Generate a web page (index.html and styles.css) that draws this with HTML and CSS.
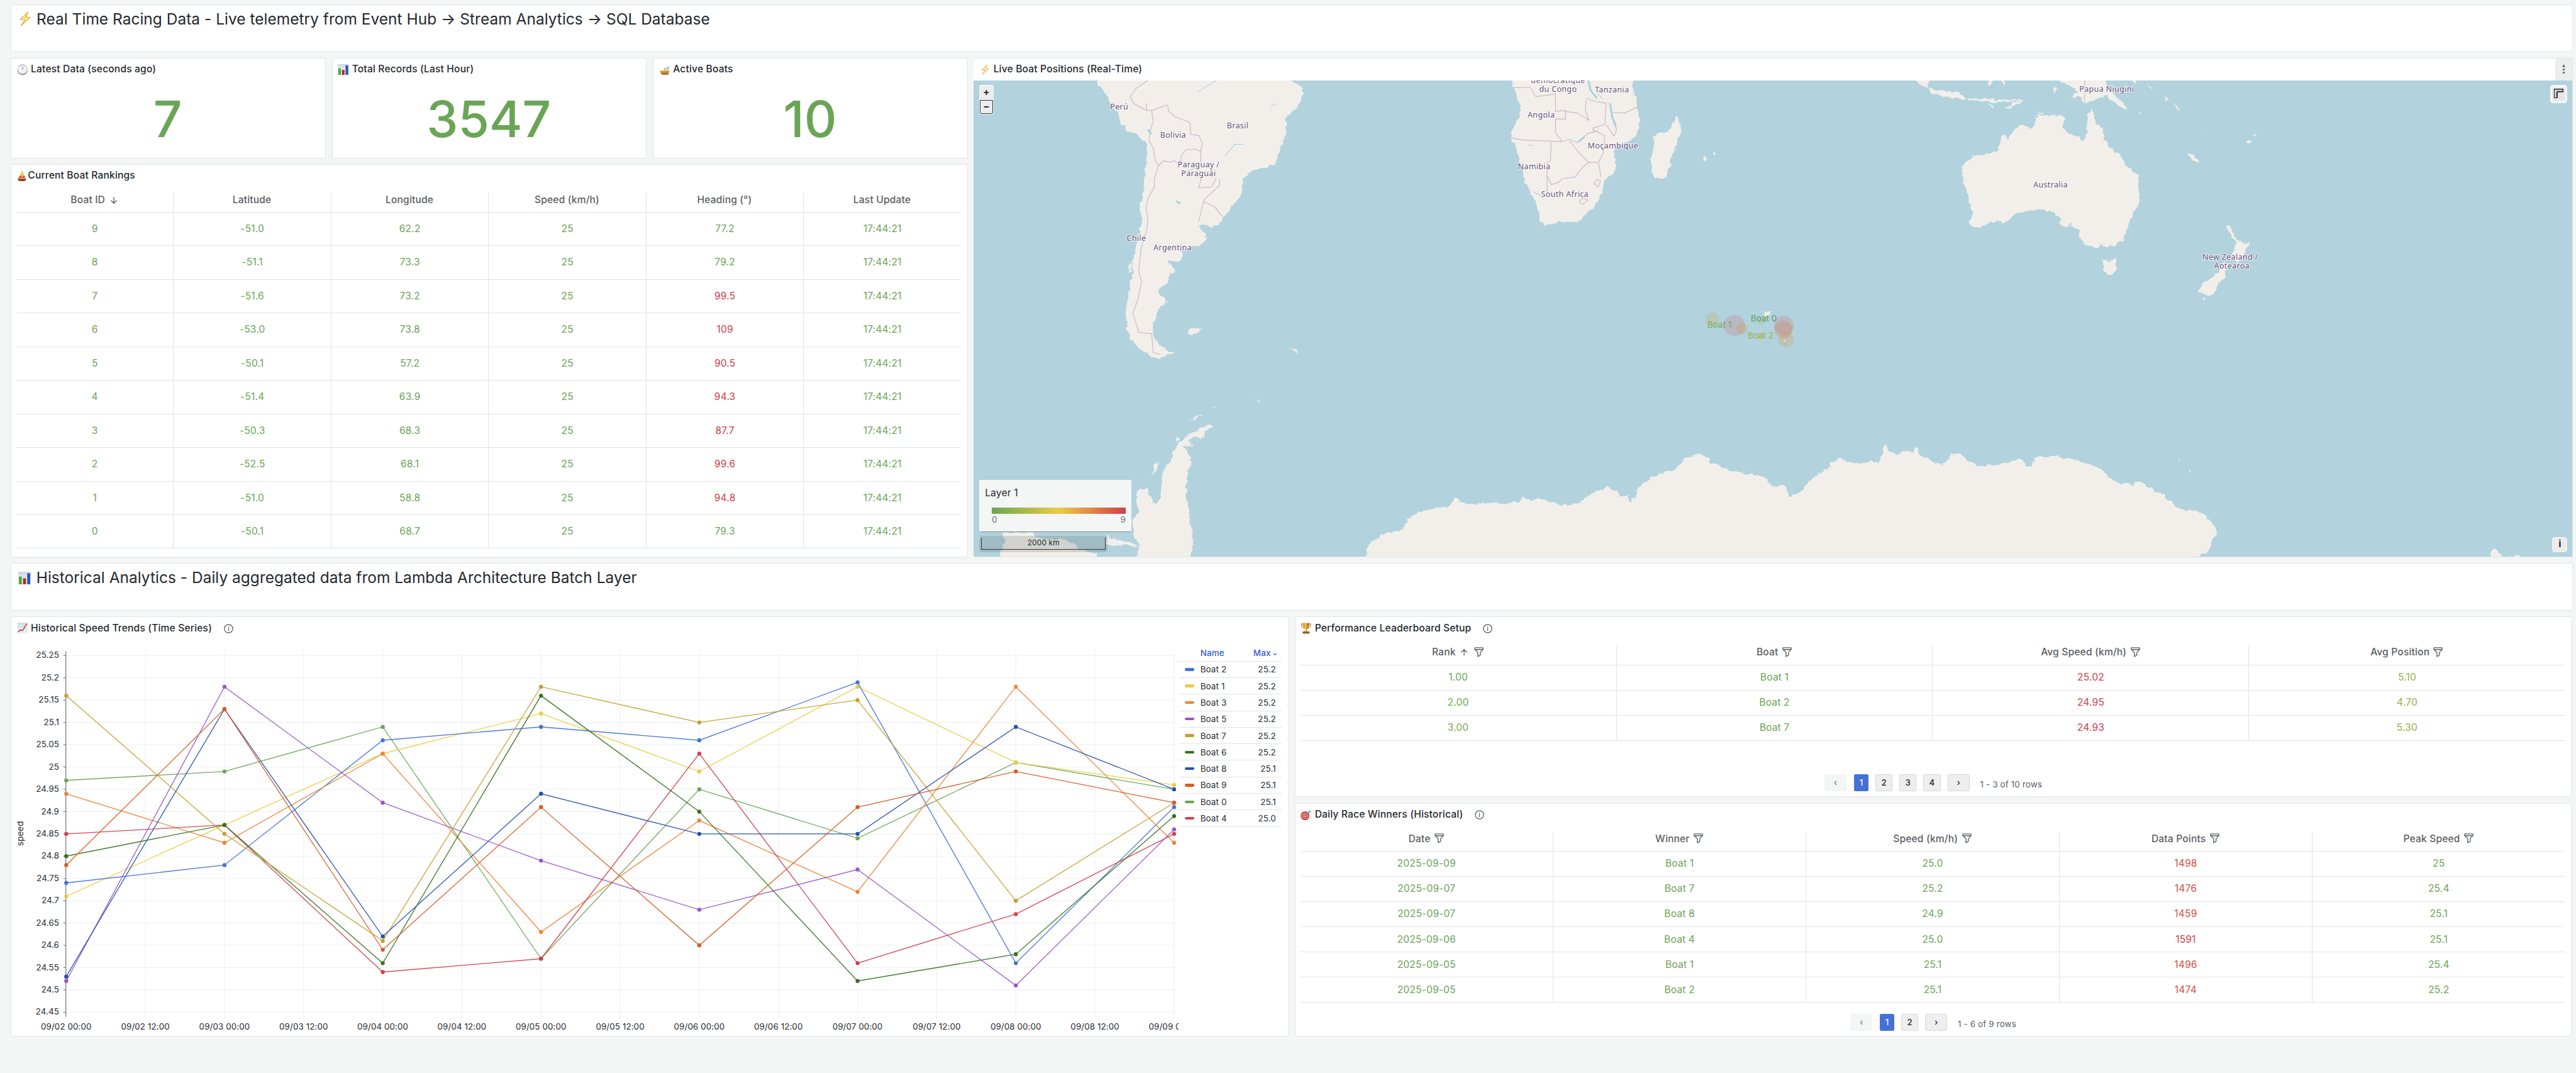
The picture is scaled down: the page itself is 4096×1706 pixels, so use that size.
FILE: index.html
```html
<!DOCTYPE html>
<html lang="en">
<head>
<meta charset="utf-8">
<title>Racing telemetry</title>
<link rel="stylesheet" href="styles.css">
</head>
<body>
<svg class="defs" aria-hidden="true">
  <defs>
    <linearGradient id="gold" x1="0" x2="1"><stop offset="0" stop-color="#b9791c"/><stop offset=".4" stop-color="#f2c44c"/><stop offset="1" stop-color="#8a5a12"/></linearGradient>
    <linearGradient id="paper" x1="0" y1="0" x2="0" y2="1"><stop offset="0" stop-color="#cbd6e2"/><stop offset="1" stop-color="#eef2f6"/></linearGradient>
    <linearGradient id="silver" x1="0" y1="0" x2="0" y2="1"><stop offset="0" stop-color="#8f9296"/><stop offset=".3" stop-color="#dcdee0"/><stop offset="1" stop-color="#6f7276"/></linearGradient>
    <linearGradient id="sail" x1="0" y1="0" x2="0" y2="1"><stop offset="0" stop-color="#f0b429"/><stop offset=".5" stop-color="#f4d742"/><stop offset=".7" stop-color="#e8603a"/><stop offset="1" stop-color="#d8402f"/></linearGradient>
    <symbol id="e-bolt" viewBox="0 0 20 28"><path d="M15.500 1.500 1.200 14.800l8.400.6L2.800 26.500 18.800 11.500l-7.600-.8z" fill="#fbe9b0" stroke="#eeae3b" stroke-width="1.500" stroke-linejoin="round"/></symbol>
    <symbol id="e-clock" viewBox="0 0 21 21"><circle cx="10.500" cy="10.500" r="10" fill="url(#silver)"/><circle cx="10.500" cy="10.300" r="8.400" fill="#f3f3f4"/><path d="M10.500 10.500V4M10.500 10.500l2-4" stroke="#8b8d90" stroke-width=".9"/></symbol>
    <symbol id="e-bars" viewBox="0 0 21 21"><path fill="url(#paper)" d="M0 0h21v21H0z"/><path d="M0 5.500h21M0 11h21M0 16h21" stroke="#fff" stroke-width=".6"/><path fill="#4fa93c" d="M1 8h5v13H1z"/><path fill="#b32b26" d="M8 11h5v10H8z"/><path fill="#2457ad" d="M15 2.500h5V21h-5z"/></symbol>
    <symbol id="e-trend" viewBox="0 0 21 21"><path fill="url(#paper)" d="M1 0h19v21H1z"/><path d="M1 5h19M1 10h19M1 15h19M7 0v21M14 0v21" stroke="#fff" stroke-width=".6"/><path d="m2 18 4-4 3 1 3-1 3-7 4-5" fill="none" stroke="#c8352c" stroke-width="1.800"/></symbol>
    <symbol id="e-speed" viewBox="0 0 22 21"><path d="M1 12h7l3-1h10l-2 7H4z" fill="#c98325"/><path d="M1 12h7l3-1h9l1 1-1 2H2z" fill="#eec45c"/><path d="M4 18h15l-1 2.500H5z" fill="#9c5a1c"/><path d="m14 10 2-4 4-3-2 7z" fill="#57b9dc"/><circle cx="11.500" cy="8.500" r="1.800" fill="#e0a33b"/></symbol>
    <symbol id="e-sail" viewBox="0 0 18 21"><path d="M9.200 0v17" stroke="#9a5b21" stroke-width=".8"/><path d="M8.600 2 2 15h6.600z" fill="url(#sail)"/><path d="M10 3c3 4 5 8 5.500 12H10z" fill="url(#sail)"/><path d="M.5 16h17c-1 3-3 4.500-5 4.500H5C3 20.500 1.200 18.500.5 16z" fill="#7e4b24"/></symbol>
    <symbol id="e-cup" viewBox="0 0 20 21"><path d="M4.500 2.500H1c0 4.500 2 7.500 5.500 8M15.500 2.500H19c0 4.500-2 7.500-5.500 8" fill="none" stroke="#c58a22" stroke-width="1.400"/><path d="M4 .5h12c0 6-1.500 11-4.500 12v3.500h-3V12.500C5.500 11.500 4 6.500 4 .5z" fill="url(#gold)"/><path d="M5.500 15.500h9l1 2h-11z" fill="#d9a035"/><path d="M3.500 17.500h13V21h-13z" fill="#8a4e1e"/></symbol>
    <symbol id="e-dart" viewBox="0 0 21 21"><circle cx="8.500" cy="12" r="8.300" fill="#c4302b"/><circle cx="8.500" cy="12" r="6.100" fill="#f3f1ef"/><circle cx="8.500" cy="12" r="5" fill="#cf3a33"/><circle cx="8.500" cy="12" r="2.800" fill="#f3f1ef"/><circle cx="8.500" cy="12" r="1.600" fill="#c4302b"/><path d="m9 11.500 7-7" stroke="#6b7a80" stroke-width="1.200"/><path d="m15 4 3-3.500.5 2.500 2.300.7L17 7l-2.500.3z" fill="#62b8c4"/></symbol>
    <symbol id="i-info" viewBox="0 0 18 18"><circle cx="9" cy="9" r="8" fill="none" stroke="#5a5e62" stroke-width="1.500"/><path d="M9 8.300v4.400" stroke="#5a5e62" stroke-width="1.600" stroke-linecap="round"/><circle cx="9" cy="5.500" r="1" fill="#5a5e62"/></symbol>
    <symbol id="i-funnel" viewBox="0 0 18 19"><path d="M1.800 1h14.400q.8 0 .8.800v1.700q0 .8-.6 1.400L11.600 10v5.500L7 17.800V10L1.600 4.900Q1 4.300 1 3.500V1.800Q1 1 1.800 1zM1.500 4.500h15" fill="none" stroke="#5a5e62" stroke-width="1.600" stroke-linejoin="round"/></symbol>
    <symbol id="i-down" viewBox="0 0 12 13"><path d="M6 .8v11.200M1 7.200l5 5 5-5" fill="none" stroke="#5a5e62" stroke-width="1.600" stroke-linecap="round" stroke-linejoin="round"/></symbol>
    <symbol id="i-up" viewBox="0 0 12 13"><path d="M6 12.200V1M1 5.800l5-5 5 5" fill="none" stroke="#5a5e62" stroke-width="1.600" stroke-linecap="round" stroke-linejoin="round"/></symbol>
  </defs>
</svg>

<main class="board">
  <section class="panel banner">
    <h1><svg class="h-icon"><use href="#e-bolt"/></svg>Real Time Racing Data - Live telemetry from Event Hub → Stream Analytics → SQL Database</h1>
  </section>

  <div class="live">
    <div class="live-left">
      <div class="stats">
        <section class="panel"><h2><svg class="emoji"><use href="#e-clock"/></svg>Latest Data (seconds ago)</h2><div class="stat">7</div></section>
        <section class="panel"><h2><svg class="emoji"><use href="#e-bars"/></svg>Total Records (Last Hour)</h2><div class="stat">3547</div></section>
        <section class="panel"><h2><svg class="emoji"><use href="#e-speed"/></svg>Active Boats</h2><div class="stat">10</div></section>
      </div>
      <section class="panel rankings">
        <h2 class="tight"><svg class="emoji"><use href="#e-sail"/></svg>Current Boat Rankings</h2>
        <div class="table tall">
          <div class="tr th"><div>Boat ID<svg class="sort"><use href="#i-down"/></svg></div><div>Latitude</div><div>Longitude</div><div>Speed (km/h)</div><div>Heading (°)</div><div>Last Update</div></div>
          <div class="tr"><div>9</div><div>-51.0</div><div>62.2</div><div>25</div><div>77.2</div><div>17:44:21</div></div>
          <div class="tr"><div>8</div><div>-51.1</div><div>73.3</div><div>25</div><div>79.2</div><div>17:44:21</div></div>
          <div class="tr"><div>7</div><div>-51.6</div><div>73.2</div><div>25</div><div class="red">99.5</div><div>17:44:21</div></div>
          <div class="tr"><div>6</div><div>-53.0</div><div>73.8</div><div>25</div><div class="red">109</div><div>17:44:21</div></div>
          <div class="tr"><div>5</div><div>-50.1</div><div>57.2</div><div>25</div><div class="red">90.5</div><div>17:44:21</div></div>
          <div class="tr"><div>4</div><div>-51.4</div><div>63.9</div><div>25</div><div class="red">94.3</div><div>17:44:21</div></div>
          <div class="tr"><div>3</div><div>-50.3</div><div>68.3</div><div>25</div><div class="red">87.7</div><div>17:44:21</div></div>
          <div class="tr"><div>2</div><div>-52.5</div><div>68.1</div><div>25</div><div class="red">99.6</div><div>17:44:21</div></div>
          <div class="tr"><div>1</div><div>-51.0</div><div>58.8</div><div>25</div><div class="red">94.8</div><div>17:44:21</div></div>
          <div class="tr"><div>0</div><div>-50.1</div><div>68.7</div><div>25</div><div>79.3</div><div>17:44:21</div></div>
        </div>
      </section>
    </div>

    <section class="panel map-panel">
      <div class="map-head">
        <h2><svg class="emoji bolt"><use href="#e-bolt"/></svg>Live Boat Positions (Real-Time)</h2>
        <button class="kebab" aria-label="Menu"><i></i><i></i><i></i></button>
      </div>
      <div class="map">
        <svg class="world" viewBox="1854 153 3044 907" preserveAspectRatio="none">
          <defs>
            <filter id="coast" filterUnits="userSpaceOnUse" x="1840" y="140" width="3080" height="940"><feTurbulence type="fractalNoise" baseFrequency=".09" numOctaves="3" seed="4"/><feDisplacementMap in="SourceGraphic" scale="10" xChannelSelector="R" yChannelSelector="G"/></filter>
          </defs>
          <g class="land" filter="url(#coast)">
            <g transform="translate(1840 90) scale(.9949 .625)">
              <path d="M252 80V118L262 130 270 150 277 172 290 200 295 232 310 255 328 268 345 292 347 330 343 380 340 430 334 480 336 530 330 575 322 620 318 650 319 690 313 720 311 760 306 800 307 850 313 885 325 905 345 935 370 952 385 935 398 930 380 920 362 890 357 870 355 845 365 820 366 795 383 785 383 765 368 750 370 735 385 720 388 700 388 690 400 683 398 672 390 665 388 650 405 653 412 640 412 615 430 610 450 600 460 580 458 565 445 545 448 538 465 545 480 542 492 520 500 500 510 480 515 470 526 450 530 400 540 385 555 370 590 360 597 330 605 300 610 260 612 220 625 195 640 165 645 140 640 112 620 106 618 80z"/>
              <path d="M1046 80V120L1055 150 1060 190 1055 220 1045 250 1042 275 1050 300 1060 340 1066 380 1070 410 1080 440 1090 470 1095 500 1098 530 1110 544 1130 533 1155 532 1170 530 1190 505 1205 475 1218 445 1220 415 1222 402 1242 385 1243 350 1238 320 1245 300 1262 290 1285 265 1289 240 1286 190 1280 150 1275 125 1278 80z"/>
              <path d="M1360 208 1368 240 1368 262 1362 280 1355 320 1345 365 1338 392 1328 401 1315 393 1311 360 1310 340 1318 310 1316 270 1325 262 1345 252 1352 235z"/>
              <path d="M766 1580V1535L775 1505 790 1495 805 1478 835 1470 845 1440 865 1415 895 1403 925 1398 935 1372 945 1385 965 1392 985 1388 1005 1385 1030 1390 1055 1385 1065 1368 1080 1375 1110 1378 1130 1390 1155 1395 1175 1385 1190 1365 1210 1350 1228 1338 1245 1352 1252 1370 1265 1360 1270 1385 1280 1370 1285 1342 1310 1310 1335 1295 1360 1280 1368 1265 1375 1250 1400 1238 1415 1245 1425 1265 1440 1275 1465 1290 1500 1298 1530 1307 1540 1335 1568 1338V1580z"/>
              <path d="M322 1580 332 1520 320 1480 318 1440 330 1415 325 1380 328 1350 345 1342 352 1365 360 1390 372 1370 375 1310 380 1280 395 1245 400 1215 420 1185 445 1165 460 1150 472 1155 455 1170 455 1190 440 1185 425 1200 435 1215 415 1212 425 1235 430 1265 425 1290 420 1330 422 1380 428 1440 434 1500 428 1580z"/>
              <path d="M60 1580 66 1545 74 1500 68 1480 130 1478 130 1490 170 1500 190 1495 205 1510 216 1530 250 1540V1580z"/>
              <path d="M270 1486 290 1500 310 1505 332 1522 300 1515 285 1522 268 1510z"/>
              <path d="M423 872 428 857 450 855 445 868 430 874zM620 910 632 918 637 934 628 925zM398 1203 402 1185 408 1192zM356 1300 360 1270 372 1265 365 1285zM423 1140 440 1125 452 1118 440 1132zM551 1077l7-2 5 6zM470 1094l8 0-4 5zM392 680l8-8 0 14zM313 660l4-6-2 30-6 8zM1411 332h5v8h-5zM1428 320h5v6h-5z"/>
            </g>
            <g transform="translate(3380 90) scale(.97194 .625)">
              <path d="M0 1580V1335H20L30 1370 45 1358 58 1345 65 1322 85 1300 105 1280 110 1265 130 1250 155 1270 185 1262 205 1262 211 1240 211 1215 218 1210 226 1232 240 1240 255 1225 272 1238 276 1215 285 1242 305 1258 328 1273 340 1255 345 1242 362 1236 375 1255 400 1275 440 1270 460 1262 480 1250 492 1276 502 1276 512 1247 550 1244 585 1255 625 1273 645 1292 655 1310 670 1325 700 1330 715 1322 730 1340 760 1360 775 1380 785 1400 800 1412 830 1412 845 1430 860 1448 866 1465 862 1490 855 1510 850 1535 830 1552V1580z"/>
              <path d="M367 380 372 350 390 332 405 325 432 318 440 300 443 275 450 268 458 280 465 255 480 235 492 240 500 250 507 240 510 215 515 205 525 208 540 205 560 208 567 215 560 240 575 260 595 275 602 286 609 275 612 235 613 205 618 189 625 205 630 235 641 248 645 275 655 305 672 320 685 350 700 375 711 392 715 445 708 490 695 530 688 560 682 592 668 597 650 612 640 600 628 611 605 600 597 580 595 560 585 550 580 545 582 530 574 548 560 545 555 515 545 503 520 492 500 497 480 505 465 515 455 530 420 532 400 549 385 543 381 530 387 515 385 480 378 450 370 410z"/>
              <path d="M640 645 655 652 669 647 668 675 662 692 652 697 645 675zM884 541 895 555 902 575 907 585 917 597 932 592 928 610 918 625 912 650 905 658 898 645 897 625 902 610 902 590 890 560zM880 650 890 660 885 675 883 700 870 715 862 745 850 757 830 745 835 725 850 705 865 690 875 670z"/>
              <path d="M555 80V101L570 110 585 120 592 135 585 150 580 155 595 150 608 165 625 165 635 150 650 148 660 165 675 180 690 185 680 165 668 150 660 135 650 115 645 80z"/>
              <path d="M275 90H300V122L285 118zM300 124 330 130 360 140 378 158 350 155 320 145 303 138zM380 155 410 156 435 160 480 158 485 162 440 168 400 164 380 161zM450 188 465 170 487 160 470 177zM413 171 430 175 428 182zM420 90H428L426 118 418 118zM440 90h10l-1 25zM546 120 552 118 550 138 546 132zM700 90h10l-5 25zM724 110 737 122 744 134zM760 148 773 160 768 162zM780 165 791 188 785 186zM806 320 820 330 832 352 818 344zM829 245 837 262 841 274zM923 285 930 282 934 290 927 294zM935 270 945 264 943 272zM514 198l14-3 0 8zM712 196l6 3-4 3zM773 198l6 4zM836 765l6-4-2 8zM791 1250l3 4 0 6zM811 1288l3 2-1 8z"/>
              <path d="M1402 1580V1533L1412 1528 1420 1542 1428 1552 1460 1548V1580z"/>
            </g>
            <path d="m3358 589 5 5 4-2 6 2-5 4 2 4-6 0-5 0z"/>
          </g>
          <g class="borders" transform="translate(1840 90) scale(.9949 .625)">
            <path d="M347 101 325 125 314 150 320 170 345 192 355 192 385 175 388 195 400 212 428 228 430 265 445 268 452 290 449 315V350M355 192 358 225 352 255 350 285 358 305 362 345 368 360 360 400V425L348 460 344 490 348 520 345 560 335 610 330 680 336 715 328 770 319 810 325 840 330 868 355 872 358 930 372 935M368 360 378 345 390 350 397 345 410 355 412 330 420 312 440 310 449 318M478 400 470 425 445 428 450 400M485 400V420L455 465 445 530M455 470 475 485 490 515M345 192V170"/>
            <path d="M1045 122H1080L1090 150 1115 145 1128 142V195L1147 192V218H1128V260L1140 285M1042 275 1065 282 1140 287 1155 280 1170 290 1190 262 1210 255M1120 290 1118 345 1112 350V440M1155 285 1175 325 1192 350H1210L1220 320 1222 270 1200 250M1112 390 1120 418 1135 410 1140 400 1165 395 1180 365 1192 350M1210 350 1215 395M1173 470 1180 458 1190 465 1180 478zM1187 160 1185 190 1192 222 1170 200 1147 195M1187 155 1205 165 1225 170 1222 235 1200 245V258M1225 235 1240 270 1245 250 1238 225M1235 198 1260 200 1285 182M1202 415l5-13 7 5-4 18zM1085 440l15 12"/>
            <path transform="translate(1547.900) scale(.97694 1)" d="M607 101V165"/>
          </g>
          <g class="lakes" transform="translate(1840 90) scale(.9949 .625)">
            <path d="M1191 101 1195 130 1207 155M1232 170 1237 215 1244 240M1172 288 1183 272M348 250l6 14M402 468l8 8" stroke-width="3"/>
            <path d="M444 135 478 101M582 180l12-8M495 330l20-35M512 295l18 0M425 375l12-6M1208 140l10 16M1075 298h10" stroke-width="1"/>
          </g>
          <g class="names">
            <text x="2131.500" y="208">Perú</text><text x="2357" y="244">Brasil</text><text x="2234" y="261.500">Bolivia</text>
            <text x="2282.500" y="318">Paraguay /</text><text x="2282.500" y="335.500">Paraguái</text><text x="2164" y="458">Chile</text><text x="2233" y="476">Argentina</text>
            <text x="2967" y="158">démocratique</text><text x="2967" y="175">du Congo</text><text x="3069.700" y="176">Tanzania</text><text x="2935" y="224">Angola</text>
            <text x="3071.700" y="282.500">Moçambique</text><text x="2921.500" y="322">Namibia</text><text x="2980" y="375">South Africa</text>
            <text x="4011.800" y="175">Papua Niugini</text><text x="3904.800" y="356.500">Australia</text><text x="4247" y="494">New Zealand /</text><text x="4250" y="511.500">Aotearoa</text>
          </g>
          <g class="boats">
            <circle cx="3260.700" cy="607.300" r="13" fill="#c9a94a" fill-opacity=".25"/>
            <circle cx="3302.700" cy="619.300" r="20.300" fill="#cf404b" fill-opacity=".17"/>
            <circle cx="3317" cy="625" r="11" fill="#d98f3a" fill-opacity=".25"/>
            <circle cx="3354.700" cy="609" r="8.700" fill="#8fb85a" fill-opacity=".2"/>
            <circle cx="3352.700" cy="640" r="7" fill="#b5c23f" fill-opacity=".2"/>
            <circle cx="3397" cy="619.700" r="18.700" fill="#cf5a50" fill-opacity=".2"/>
            <circle cx="3396" cy="627.300" r="17" fill="#dd6a3c" fill-opacity=".22"/>
            <circle cx="3401" cy="645.700" r="15" fill="#d69a45" fill-opacity=".27"/>
            <circle cx="3398.300" cy="648.300" r="1.500" fill="#f0ece0"/>
            <text x="3251.300" y="624" fill="#7bab4d">Boat 1</text><text x="3334" y="612" fill="#5fa05a">Boat 0</text><text x="3328.300" y="644" fill="#9bb23c">Boat 2</text>
          </g>
        </svg>
        <div class="zoom"><button>+</button><button class="focus">−</button></div>
        <div class="ruler"><svg viewBox="0 0 18 18"><path d="M1 1h16v5H6.500v11H1z" fill="none" stroke="#24242e" stroke-width="1.900"/><path d="M6.500 3.800V6M9 3.800V6M11.500 3.800V6M14 3.800V6M4.200 8.500H6M4.200 11H6M4.200 13.500H6" stroke="#24242e" stroke-width="1.200"/></svg></div>
        <div class="map-legend"><div class="layer">Layer 1</div><div class="ramp"></div><div class="ends"><span>0</span><span>9</span></div></div>
        <div class="scale"><span>2000 km</span></div>
        <div class="credit">i</div>
      </div>
    </section>
  </div>

  <section class="panel banner">
    <h1><svg class="h-icon bars"><use href="#e-bars"/></svg>Historical Analytics - Daily aggregated data from Lambda Architecture Batch Layer</h1>
  </section>

  <div class="history">
    <section class="panel">
      <h2><svg class="emoji"><use href="#e-trend"/></svg>Historical Speed Trends (Time Series)<svg class="info"><use href="#i-info"/></svg></h2>
      <div class="chart">
        <svg id="plot" viewBox="22 1217 2222.600 750"></svg>
        <div class="legend">
          <div class="lg head"><i></i><span>Name</span><b>Max<svg viewBox="0 0 8 5"><path d="m1 1 3 3 3-3" fill="none" stroke="#2f60d0" stroke-width="1.400"/></svg></b></div>
          <div class="lg"><i class="s2"></i><span>Boat 2</span><b>25.2</b></div>
          <div class="lg"><i class="s1"></i><span>Boat 1</span><b>25.2</b></div>
          <div class="lg"><i class="s3"></i><span>Boat 3</span><b>25.2</b></div>
          <div class="lg"><i class="s5"></i><span>Boat 5</span><b>25.2</b></div>
          <div class="lg"><i class="s7"></i><span>Boat 7</span><b>25.2</b></div>
          <div class="lg"><i class="s6"></i><span>Boat 6</span><b>25.2</b></div>
          <div class="lg"><i class="s8"></i><span>Boat 8</span><b>25.1</b></div>
          <div class="lg"><i class="s9"></i><span>Boat 9</span><b>25.1</b></div>
          <div class="lg"><i class="s0"></i><span>Boat 0</span><b>25.1</b></div>
          <div class="lg"><i class="s4"></i><span>Boat 4</span><b>25.0</b></div>
        </div>
      </div>
    </section>
    <div class="history-right">
      <section class="panel leaders">
        <h2><svg class="emoji"><use href="#e-cup"/></svg>Performance Leaderboard Setup<svg class="info"><use href="#i-info"/></svg></h2>
        <div class="table">
          <div class="tr th"><div>Rank<svg class="sort"><use href="#i-up"/></svg><svg class="funnel"><use href="#i-funnel"/></svg></div><div>Boat<svg class="funnel"><use href="#i-funnel"/></svg></div><div>Avg Speed (km/h)<svg class="funnel"><use href="#i-funnel"/></svg></div><div>Avg Position<svg class="funnel"><use href="#i-funnel"/></svg></div></div>
          <div class="tr"><div>1.00</div><div>Boat 1</div><div class="red">25.02</div><div class="lime">5.10</div></div>
          <div class="tr"><div class="g2">2.00</div><div>Boat 2</div><div class="red">24.95</div><div class="lime">4.70</div></div>
          <div class="tr"><div class="g3">3.00</div><div>Boat 7</div><div class="red">24.93</div><div class="lime">5.30</div></div>
        </div>
        <div class="pager"><span class="nav off">‹</span><span class="on">1</span><span>2</span><span>3</span><span>4</span><span class="nav">›</span><em>1 - 3 of 10 rows</em></div>
      </section>
      <section class="panel winners">
        <h2><svg class="emoji"><use href="#e-dart"/></svg>Daily Race Winners (Historical)<svg class="info"><use href="#i-info"/></svg></h2>
        <div class="table">
          <div class="tr th"><div>Date<svg class="funnel"><use href="#i-funnel"/></svg></div><div>Winner<svg class="funnel"><use href="#i-funnel"/></svg></div><div>Speed (km/h)<svg class="funnel"><use href="#i-funnel"/></svg></div><div>Data Points<svg class="funnel"><use href="#i-funnel"/></svg></div><div>Peak Speed<svg class="funnel"><use href="#i-funnel"/></svg></div></div>
          <div class="tr"><div>2025-09-09</div><div>Boat 1</div><div>25.0</div><div class="brick">1498</div><div>25</div></div>
          <div class="tr"><div>2025-09-07</div><div>Boat 7</div><div>25.2</div><div class="brick">1476</div><div>25.4</div></div>
          <div class="tr"><div>2025-09-07</div><div>Boat 8</div><div>24.9</div><div class="brick">1459</div><div>25.1</div></div>
          <div class="tr"><div>2025-09-06</div><div>Boat 4</div><div>25.0</div><div class="red">1591</div><div>25.1</div></div>
          <div class="tr"><div>2025-09-05</div><div>Boat 1</div><div>25.1</div><div class="brick">1496</div><div>25.4</div></div>
          <div class="tr"><div>2025-09-05</div><div>Boat 2</div><div>25.1</div><div class="brick">1474</div><div>25.2</div></div>
        </div>
        <div class="pager"><span class="nav off">‹</span><span class="on">1</span><span>2</span><span class="nav">›</span><em>1 - 6 of 9 rows</em></div>
      </section>
    </div>
  </div>
</main>
<script src="chart.js"></script>
</body>
</html>
```
FILE: styles.css
```css
/* One rem is ten layout units; the board is 490.4rem wide. */
html { font-size: calc(100vw / 490.4); }
* { box-sizing: border-box; }
body { margin: 0; height: 204.2rem; overflow: hidden; background: #f4f5f5; color: #24292e; font: 1.867rem/1.571 Inter, sans-serif; letter-spacing: .01071em; }
h1, h2 { margin: 0; }
button { padding: 0; border: 0; font: inherit; color: inherit; }
.defs { position: absolute; width: 0; height: 0; }

.board { display: flex; flex-direction: column; gap: 1.07rem; padding: .83rem .6rem 0 2.04rem; }
.panel { background: #fff; border: 1px solid #e3e5e6; border-radius: .27rem; overflow: hidden; }
.banner { height: 9.08rem; padding: .85rem 0 0 1.3rem; }
h1 { display: flex; align-items: center; font-weight: 400; font-size: 2.93rem; line-height: 3.6rem; letter-spacing: .0008em; white-space: pre; }
.h-icon { width: 2.1rem; height: 2.9rem; margin: 0 1.2rem 0 .2rem; }
.h-icon.bars { width: 2.4rem; height: 2.4rem; margin: 0 1.05rem 0 0; }
h2 { display: flex; align-items: center; gap: .57rem; height: 4.3rem; padding-left: 1.05rem; font-size: 1.867rem; font-weight: 500; white-space: nowrap; }
h2.tight { gap: .2rem; }
.emoji { width: 2.1rem; height: 2.1rem; }
.tight .emoji { width: 1.9rem; }
.bolt { width: 1.8rem; margin-right: .1rem; }
.info { width: 1.8rem; height: 1.8rem; margin-left: 1.65rem; }

.live { display: grid; grid-template-columns: 182.2rem 1fr; gap: 1.12rem; height: 95.16rem; }
.live-left { display: flex; flex-direction: column; gap: 1.07rem; }
.stats { display: grid; grid-template-columns: repeat(3, 1fr); gap: 1.2rem; height: 19.15rem; }
.stat { display: flex; align-items: center; justify-content: center; height: 14.4rem; padding-right: .15rem; font-size: 9.6rem; font-weight: 500; line-height: 1; letter-spacing: 0; color: #6aa556; }
.rankings { flex: 1; }

.table { margin: 1.07rem 1.2rem 0 .95rem; }
.tr { display: flex; height: 4.8rem; padding-top: .1rem; color: #6aa556; background: #fff; border-bottom: 1px solid #e2e3e4; }
.tall .tr { height: 6.4rem; }
.tr > div { flex: 1 1 0; display: flex; align-items: center; justify-content: center; margin-top: -.1rem; border-right: 1px solid #e2e3e4; white-space: nowrap; }
.tr > div:last-child { border-right: 0; }
.table .th { height: 3.78rem; color: #5a5e62; font-weight: 500; }
.th > div { padding: 0 .15rem .9rem 0; }
.tall .th > div { padding-bottom: .8rem; }
.sort { width: 1.2rem; height: 1.3rem; margin-left: 1.05rem; }
.tall .sort { margin-right: .25rem; }
.funnel { width: 1.8rem; height: 1.9rem; margin: -.2rem 0 0 .75rem; }
.sort + .funnel { margin-left: 1.25rem; }
.tr .red { color: #cf404b; }
.tr .brick { color: #d0503f; }
.tr .lime { color: #94b244; }
.tr .g2 { color: #72a753; }
.tr .g3 { color: #7aaa50; }

.map-panel { display: flex; flex-direction: column; border-left: 0; }
.map-head { display: flex; justify-content: space-between; height: 4.22rem; }
.map-head h2 { padding-left: 1.3rem; }
.kebab { display: flex; flex-direction: column; align-items: center; justify-content: center; gap: .22rem; width: 3.2rem; height: 4.22rem; background: #ededed; border-radius: .27rem; }
.kebab i { width: .4rem; height: .4rem; border-radius: 50%; background: #54585c; }
.map { position: relative; flex: 1; background: #b2d2dd; }
.world { display: block; width: 100%; height: 100%; }
.land { fill: #f2efea; }
.borders path { fill: none; stroke: #cbb9c8; stroke-width: 1.2; vector-effect: non-scaling-stroke; }
.lakes path { fill: none; stroke: #a9d0de; vector-effect: non-scaling-stroke; }
.names { font: 15px "Noto Sans", sans-serif; letter-spacing: .4px; fill: #66507a; text-anchor: middle; stroke: #fff; stroke-opacity: .75; stroke-width: 2.6px; stroke-linejoin: round; paint-order: stroke; }
.boats { font: 16.2px Inter, sans-serif; letter-spacing: 0; }
.zoom { position: absolute; left: 1rem; top: .9rem; display: flex; flex-direction: column; gap: 1px; width: 2.8rem; padding: .13rem; background: #f4f5f5; border-radius: .4rem; }
.zoom button { height: 2.62rem; background: #ececec; border-radius: .27rem .27rem 0 0; font-weight: 700; line-height: 2.5rem; }
.zoom .focus { border: 1px solid #333; border-radius: 0 0 .27rem .27rem; }
.ruler { position: absolute; right: .9rem; top: .9rem; width: 3.3rem; height: 3.4rem; padding: .4rem; background: #f4f5f5; border-radius: .5rem; }
.ruler svg { display: block; width: 2.5rem; height: 2.6rem; padding: .2rem .35rem .5rem .3rem; background: #e6e6e6; }
.map-legend { position: absolute; left: 1.1rem; top: 76rem; width: 28.9rem; height: 9.9rem; padding: 1.1rem 1.05rem 0; background: #f4f5f5; box-shadow: 0 .13rem .1rem rgba(24, 26, 27, .4); }
.ramp { height: 1.2rem; margin: 1.3rem 0 0 1.3rem; border-radius: .15rem; background: linear-gradient(90deg, #6aa556, #ebcc45 50%, #cf404b); }
.ends { display: flex; justify-content: space-between; margin-left: 1.3rem; font-size: 1.6rem; line-height: 2.3rem; color: #6b6f73; }
.scale { position: absolute; left: 1.1rem; top: 86.7rem; width: 24.4rem; height: 3.05rem; padding: .35rem .35rem .45rem; background: rgba(90, 95, 100, .2); border-radius: .5rem; }
.scale span { display: block; height: 2.25rem; border: 1.5px solid #33363a; border-top: 0; text-align: center; font-size: 1.42rem; line-height: 2.1rem; }
.credit { position: absolute; right: .9rem; bottom: .85rem; width: 2.9rem; height: 2.9rem; background: #ececec; border: .15rem solid #f4f5f5; border-radius: .5rem; text-align: center; font-weight: 700; line-height: 2.5rem; }

.history { display: grid; grid-template-columns: 243.3rem 243.15rem; gap: 1.13rem; height: 79.95rem; }
.chart { display: flex; }
#plot { flex: none; width: 222.26rem; height: 75rem; overflow: hidden; font-family: Inter, sans-serif; font-size: 16px; letter-spacing: .12px; fill: #24292e; }
.grid { stroke: #eeeff0; stroke-width: 1.3; }
.axis { stroke: #6b6f73; stroke-width: 1.3; }
.line { fill: none; stroke-width: 1.6; stroke-opacity: .95; }
.legend { width: 19.6rem; padding-top: 1.1rem; font-size: 1.6rem; line-height: 1.5; }
.lg { display: flex; align-items: center; height: 3.15rem; padding: 0 1.1rem; border-bottom: 1px solid #e2e3e4; }
.lg i { width: 1.9rem; height: .53rem; margin-right: 1.1rem; border-radius: .27rem; }
.lg b { margin-left: auto; font-weight: 400; }
.lg.head { height: 3.05rem; color: #2f60d0; font-weight: 500; }
.head b { font-weight: 500; margin-right: -.2rem; }
.head svg { width: .8rem; height: .5rem; margin-left: .4rem; vertical-align: middle; }
.s0 { background: #6aa556; } .s1 { background: #ebcc45; } .s2 { background: #4572d8; } .s3 { background: #ee8437; } .s4 { background: #cf404b; }
.s5 { background: #9a55c9; } .s6 { background: #35731f; } .s7 { background: #c6a02d; } .s8 { background: #2450b0; } .s9 { background: #d85c24; }

.history-right { display: flex; flex-direction: column; gap: 1.15rem; }
.history-right .panel { display: flex; flex-direction: column; }
.leaders { height: 34.35rem; }
.winners { flex: 1; }
.pager { display: flex; align-items: flex-start; justify-content: center; gap: 1.3rem; height: 3.2rem; margin: auto 0 1rem; font-size: 1.6rem; font-weight: 500; line-height: 3rem; }
.pager span { height: 3.2rem; padding: 0 1rem; border: 1px solid #d6d7d8; border-radius: .27rem; background: #eeeeee; }
.pager .on { padding: 0 .95rem; border-color: #4570d6; background: #4570d6; color: #fff; }
.pager .nav { width: 4.2rem; padding: 0; text-align: center; }
.pager .off { margin-right: .1rem; border-color: #f4f5f5; background: #f4f5f5; color: #777b7f; }
.pager em { margin: .45rem 0 0 .7rem; font-style: normal; font-weight: 400; line-height: 3rem; color: #5a5e62; }
```
FILE: chart.js
```js
// Daily average speed per boat, 09/02 to 09/09.
const series = [
  ['#6aa556', [24.97, 24.99, 25.09, 24.57, 24.95, 24.84, 25.01, 24.95]],
  ['#ebcc45', [24.71, 24.87, 25.03, 25.12, 24.99, 25.18, 25.01, 24.96]],
  ['#4572d8', [24.74, 24.78, 25.06, 25.09, 25.06, 25.19, 24.56, 24.91]],
  ['#ee8437', [24.94, 24.83, 25.03, 24.63, 24.88, 24.72, 25.18, 24.83]],
  ['#cf404b', [24.85, 24.87, 24.54, 24.57, 25.03, 24.56, 24.67, 24.85]],
  ['#9a55c9', [24.52, 25.18, 24.92, 24.79, 24.68, 24.77, 24.51, 24.86]],
  ['#35731f', [24.80, 24.87, 24.56, 25.16, 24.90, 24.52, 24.58, 24.89]],
  ['#c6a02d', [25.16, 24.85, 24.61, 25.18, 25.10, 25.15, 24.70, 24.92]],
  ['#2450b0', [24.53, 25.13, 24.62, 24.94, 24.85, 24.85, 25.09, 24.95]],
  ['#d85c24', [24.78, 25.13, 24.59, 24.91, 24.60, 24.91, 24.99, 24.92]]
];
const X = d => 126.5 + d * 301.3;
const Y = v => 1247.3 + (25.25 - v) * 848.6;
let out = '';
for (let i = 0; i <= 16; i++) {
  const v = +(25.25 - i * 0.05).toFixed(2), y = Y(v);
  out += `<path class="grid" d="M126 ${y}H2235.500"/><path class="axis" d="M121 ${y}h5"/><text x="113" y="${y + 5}" text-anchor="end">${v}</text>`;
}
for (let h = 0; h <= 14; h++) {
  const x = X(h / 2), label = `09/0${2 + (h >> 1)} ${h % 2 ? '12' : '00'}:00`;
  out += `<path class="grid" d="M${x} 1239V1939"/><text x="${x}" y="1959" text-anchor="middle">${label}</text>`;
}
out += '<path class="axis" d="M125.800 1239V1935"/><text transform="translate(45 1586) rotate(-90)" text-anchor="middle">speed</text>';
for (const [color, values] of series) {
  const pts = values.map((v, d) => [X(d), Y(v)]);
  out += `<polyline class="line" stroke="${color}" points="${pts.join(' ')}"/>`;
  out += pts.map(p => `<circle cx="${p[0]}" cy="${p[1]}" r="3.800" fill="${color}"/>`).join('');
}
document.getElementById('plot').innerHTML = out;
```
